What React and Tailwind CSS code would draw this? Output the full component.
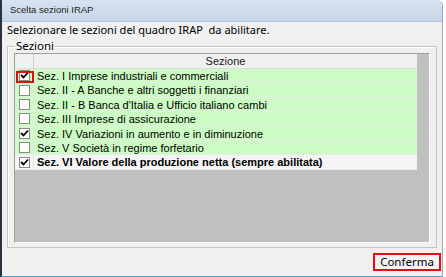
import React from 'react';

const rows = [
  { label: 'Sez. I Imprese industriali e commerciali', checked: true, marked: true },
  { label: 'Sez. II - A Banche e altri soggetti i finanziari', checked: false },
  { label: "Sez. II - B Banca d'Italia e Ufficio italiano cambi", checked: false },
  { label: 'Sez. III Imprese di assicurazione', checked: false },
  { label: 'Sez. IV Variazioni in aumento e in diminuzione', checked: true },
  { label: 'Sez. V Società in regime forfetario', checked: false },
  { label: 'Sez. VI Valore della produzione netta (sempre abilitata)', checked: true, bold: true },
];

function Check({ checked }) {
  return (
    <span className="w-[11px] h-[11px] bg-white border border-[#8a8a8a] flex items-center justify-center">
      {checked && (
        <svg width="9" height="9" viewBox="0 0 9 9">
          <path d="M1 4 L3.5 6.5 L8 1.5" stroke="#000" strokeWidth="1.8" fill="none" />
        </svg>
      )}
    </span>
  );
}

export default function App() {
  return (
    <div className="w-[446px] h-[277px] bg-white flex overflow-hidden" style={{ fontFamily: '"Liberation Sans", Arial, sans-serif' }}>
      <div className="w-[443px] h-full flex flex-col border-l-2 border-[#26323e] border-r border-r-[#8fa6bf] border-b border-b-[#4aa3c4] rounded-tr-[6px] overflow-hidden">
        {/* Title */}
        <div className="h-[22px] shrink-0 bg-gradient-to-b from-[#d8e3f0] to-[#c6d5e7] border-b border-[#b7c7d9] flex items-center pl-[8px] text-[9.5px] text-[#1e1e1e]">
          Scelta sezioni IRAP
        </div>

        {/* Body */}
        <div className="flex-1 bg-[#f0f0f0] flex flex-col pl-[5px] pr-[1px]">
          <div className="h-[17px] flex items-center text-[11px] text-black" style={{ fontFamily: '"Noto Sans", sans-serif' }}>
            Selezionare le sezioni del quadro IRAP&nbsp; da abilitare.
          </div>

          <fieldset className="mr-[4px] border border-[#c5c5c5] shadow-[inset_1px_1px_0_#ffffff] px-[6px] pb-[4px]">
            <legend className="ml-[1px] px-[1px] text-[11.5px] leading-[14px] text-black" style={{ fontFamily: '"Noto Sans", sans-serif' }}>
              Sezioni
            </legend>
            <div className="h-[190px] bg-[#c0c0c0] border-t border-l border-[#a0a0a0] border-b-white border-r-white border-b border-r text-[11px] text-black">
              <div className="w-[402px] bg-[#f0f0f0] flex h-[15px] border-b border-[#dcdcdc]">
                <div className="w-[19px] border-r border-[#cfcfcf] bg-[#f0f0f0]" />
                <div className="flex-1 text-center leading-[15px] text-[#202020]">Sezione</div>
              </div>
              {rows.map((r) => (
                <div
                  key={r.label}
                  className={`w-[402px] flex h-[14.4px] border-b border-[#e6ece6] ${r.bold ? 'bg-[#f4f4f4]' : 'bg-[#ccfcc4]'}`}
                >
                  <div className="w-[19px] shrink-0 border-r border-[#e2e8e2] flex items-center justify-center relative">
                    <Check checked={r.checked} />
                    {r.marked && (
                      <span className="absolute left-[1px] top-[2px] w-[18px] h-[12px] border-2 border-[#e01010]" />
                    )}
                  </div>
                  <div className={`pl-[3px] leading-[14px] whitespace-nowrap ${r.bold ? 'font-bold' : ''}`}>{r.label}</div>
                </div>
              ))}
            </div>
          </fieldset>

          <div className="flex justify-end mt-[5px]">
            <button className="w-[68px] h-[18px] border-2 border-[#e01010] bg-[#f4f4f4] text-[11.5px] text-black leading-[14px] flex items-center justify-center" style={{ fontFamily: '"Noto Sans", sans-serif' }}>
              Conferma
            </button>
          </div>
        </div>
      </div>
    </div>
  );
}
